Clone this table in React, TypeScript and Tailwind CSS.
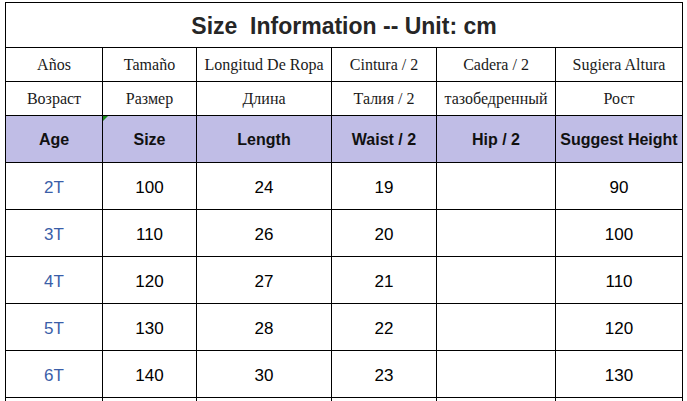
import React from "react";

const spanish = ["Años", "Tamaño", "Longitud De Ropa", "Cintura / 2", "Cadera / 2", "Sugiera Altura"];
const russian = ["Возраст", "Размер", "Длина", "Талия / 2", "тазобедренный", "Рост"];
const english = ["Age", "Size", "Length", "Waist / 2", "Hip / 2", "Suggest Height"];

const rows = [
  ["2T", "100", "24", "19", "", "90"],
  ["3T", "110", "26", "20", "", "100"],
  ["4T", "120", "27", "21", "", "110"],
  ["5T", "130", "28", "22", "", "120"],
  ["6T", "140", "30", "23", "", "130"],
  ["", "", "", "", "", ""],
];

export default function App() {
  return (
    <div className="w-[687px] h-[401px] overflow-hidden bg-white pl-[5px] pt-[2px] font-['Liberation_Sans',Arial,sans-serif]">
      <div className="grid grid-cols-[96px_93px_134px_104px_118px_126px] gap-px bg-black p-px w-[678px]">
        {/* title */}
        <div className="col-span-6 h-[44px] pt-[3px] bg-white flex items-center justify-center text-[23px] font-bold text-[#262626] whitespace-pre">
          {"Size  Information -- Unit: cm"}
        </div>

        {/* spanish labels */}
        {spanish.map((t) => (
          <div
            key={t}
            className="h-[33px] pt-px bg-white flex items-center justify-center text-[16px] text-[#1a1a1a] whitespace-nowrap font-['Liberation_Serif','DejaVu_Serif',serif]"
          >
            {t}
          </div>
        ))}

        {/* russian labels */}
        {russian.map((t) => (
          <div
            key={t}
            className="h-[33px] pt-px bg-white flex items-center justify-center text-[16px] text-[#1a1a1a] whitespace-nowrap font-['Liberation_Serif','DejaVu_Serif',serif]"
          >
            {t}
          </div>
        ))}

        {/* english header */}
        {english.map((t, i) => (
          <div
            key={t}
            className="relative h-[46px] pt-[2px] bg-[#c0bde6] flex items-center justify-center text-[16px] font-bold text-[#111] whitespace-nowrap"
          >
            {i === 1 && (
              <span className="absolute left-0 top-0 w-0 h-0 border-t-[5px] border-r-[5px] border-t-[#1a8a1a] border-r-transparent" />
            )}
            {t}
          </div>
        ))}

        {rows.map((r, ri) =>
          r.map((v, i) => (
            <div
              key={`${ri}-${i}`}
              className={
                i === 0
                  ? "h-[46px] pt-[3px] bg-white flex items-center justify-center text-[17px] text-[#3a5ea8]"
                  : "h-[46px] pt-[3px] bg-white flex items-center justify-center text-[17px] text-black"
              }
            >
              {v}
            </div>
          ))
        )}
      </div>
    </div>
  );
}
